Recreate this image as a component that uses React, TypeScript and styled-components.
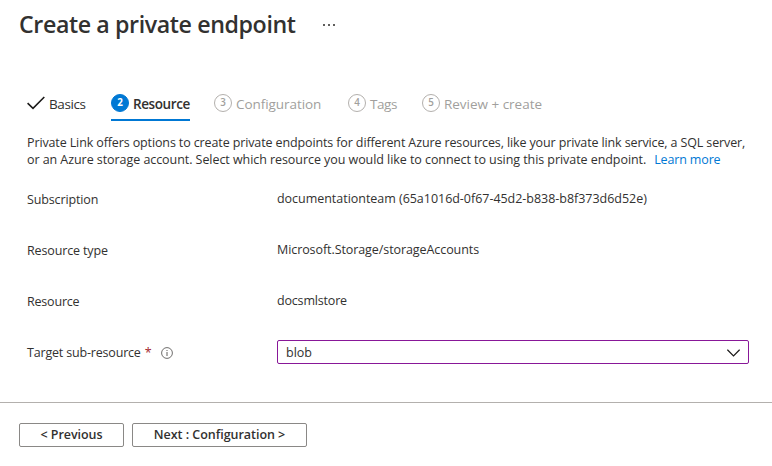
import React from "react";
import styled, { createGlobalStyle } from "styled-components";

const Global = createGlobalStyle`
  * { box-sizing: border-box; }
  body {
    margin: 0;
    background: #fff;
    color: #323130;
    font-family: "Open Sans", "Noto Sans", sans-serif;
    font-size: 12.5px;
    line-height: 17px;
  }
`;

const Page = styled.div`
  width: 772px;
  height: 466px;
  display: flex;
  flex-direction: column;
  overflow: hidden;
  white-space: nowrap;
`;

const Header = styled.header`
  display: flex;
  align-items: center;
  height: 50px;
  padding: 0 0 2px 19px;
  gap: 27px;
`;

const Title = styled.h1`
  margin: 0;
  width: 277px;
  font-size: 23.2px;
  line-height: 32px;
  font-weight: 600;
  letter-spacing: -0.39px;
`;

const MoreButton = styled.button`
  display: flex;
  gap: 3px;
  padding: 1px 0 0;
  border: 0;
  background: none;
`;

const Dot = styled.span`
  width: 2px;
  height: 2px;
  background: #605e5c;
`;

const Tabs = styled.nav`
  display: flex;
  height: 29px;
  margin: 42px 0 0 27px;
`;

const Tab = styled.div<{ $width: number; $gap: number; $state: "done" | "active" | "todo" }>`
  display: flex;
  align-items: flex-start;
  gap: 4px;
  width: ${(p) => p.$width}px;
  margin-right: ${(p) => p.$gap}px;
  color: ${(p) => (p.$state === "todo" ? "#a19f9d" : "#323130")};
  border-bottom: 2px solid ${(p) => (p.$state === "active" ? "#0078d4" : "transparent")};
`;

const TabLabel = styled.span<{ $spacing: number; $active?: boolean }>`
  padding-top: 4px;
  font-size: 13.5px;
  line-height: 17px;
  font-weight: ${(p) => (p.$active ? 600 : 400)};
  letter-spacing: ${(p) => p.$spacing}px;
`;

const StepNumber = styled.span<{ $active: boolean }>`
  flex: none;
  display: flex;
  align-items: center;
  justify-content: center;
  width: 18px;
  height: 18px;
  margin-top: 1.5px;
  border-radius: 50%;
  border: 1px solid ${(p) => (p.$active ? "#0078d4" : "#b3b0ad")};
  background: ${(p) => (p.$active ? "#0078d4" : "#fff")};
  color: ${(p) => (p.$active ? "#fff" : "#a19f9d")};
  font-size: 9.8px;
  line-height: 12px;
  font-weight: ${(p) => (p.$active ? 700 : 600)};
`;

const CheckIcon = styled.svg`
  flex: none;
  width: 18px;
  height: 14px;
  margin-top: 4px;
`;

const Intro = styled.div`
  margin: 13px 0 0 27px;
`;

const Line = styled.div<{ $spacing: number }>`
  height: 17px;
  letter-spacing: ${(p) => p.$spacing}px;
`;

const Link = styled.a`
  margin-left: 8px;
  color: #0078d4;
  letter-spacing: -0.15px;
  text-decoration: none;
`;

const Form = styled.div`
  display: flex;
  flex-direction: column;
  margin: 6px 0 0 27px;
`;

const Row = styled.div`
  display: flex;
  align-items: center;
  height: 51px;
`;

const Label = styled.div<{ $spacing: number }>`
  display: flex;
  align-items: center;
  width: 250px;
  letter-spacing: ${(p) => p.$spacing}px;
`;

const Value = styled.div<{ $spacing: number }>`
  margin-top: -2px;
  letter-spacing: ${(p) => p.$spacing}px;
`;

const Required = styled.span`
  margin-left: 4px;
  color: #a4262c;
`;

const InfoIcon = styled.svg`
  width: 12px;
  height: 12px;
  margin-left: 10px;
`;

const Select = styled.div`
  display: flex;
  align-items: center;
  justify-content: space-between;
  width: 472px;
  height: 24px;
  margin-top: -1px;
  padding: 1px 8px 0;
  border: 1px solid #881798;
  border-radius: 2px;
`;

const Chevron = styled.svg`
  width: 13px;
  height: 8px;
`;

const Footer = styled.footer`
  display: flex;
  gap: 8px;
  height: 64px;
  margin-top: auto;
  padding: 20px 0 0 19px;
  border-top: 1px solid #b3b0ad;
`;

const Button = styled.button<{ $width: number; $spacing: number }>`
  width: ${(p) => p.$width}px;
  height: 24px;
  padding: 0 0 2px;
  border: 1px solid #8a8886;
  border-radius: 2px;
  background: #fff;
  color: #323130;
  font: 600 12.5px/17px "Open Sans", "Noto Sans", sans-serif;
  letter-spacing: ${(p) => p.$spacing}px;
`;

export default function App() {
  return (
    <>
      <Global />
      <Page>
        <Header>
          <Title>Create a private endpoint</Title>
          <MoreButton aria-label="More"><Dot /><Dot /><Dot /></MoreButton>
        </Header>
        <Tabs>
          <Tab $width={59} $gap={25} $state="done">
            <CheckIcon viewBox="0 0 18 14" fill="none" stroke="#1b1a19" strokeWidth="1.6">
              <path d="M0.6 7.2 6 12.3 17.3 1" />
            </CheckIcon>
            <TabLabel $spacing={-0.4}>Basics</TabLabel>
          </Tab>
          <Tab $width={79} $gap={24} $state="active">
            <StepNumber $active>2</StepNumber>
            <TabLabel $spacing={-0.4} $active>Resource</TabLabel>
          </Tab>
          <Tab $width={107} $gap={27} $state="todo">
            <StepNumber $active={false}>3</StepNumber>
            <TabLabel $spacing={-0.06}>Configuration</TabLabel>
          </Tab>
          <Tab $width={49} $gap={25} $state="todo">
            <StepNumber $active={false}>4</StepNumber>
            <TabLabel $spacing={-0.45}>Tags</TabLabel>
          </Tab>
          <Tab $width={121} $gap={0} $state="todo">
            <StepNumber $active={false}>5</StepNumber>
            <TabLabel $spacing={-0.02}>Review + create</TabLabel>
          </Tab>
        </Tabs>
        <Intro>
          <Line $spacing={-0.122}>Private Link offers options to create private endpoints for different Azure resources, like your private link service, a SQL server,</Line>
          <Line $spacing={-0.06}>
            or an Azure storage account. Select which resource you would like to connect to using this private endpoint.
            <Link>Learn more</Link>
          </Line>
        </Intro>
        <Form>
          <Row>
            <Label $spacing={-0.13}>Subscription</Label>
            <Value $spacing={-0.03}>documentationteam (65a1016d-0f67-45d2-b838-b8f373d6d52e)</Value>
          </Row>
          <Row>
            <Label $spacing={-0.14}>Resource type</Label>
            <Value $spacing={-0.08}>Microsoft.Storage/storageAccounts</Value>
          </Row>
          <Row>
            <Label $spacing={-0.2}>Resource</Label>
            <Value $spacing={-0.18}>docsmlstore</Value>
          </Row>
          <Row>
            <Label $spacing={-0.18}>
              Target sub-resource<Required>*</Required>
              <InfoIcon viewBox="0 0 12 12" fill="none" stroke="#605e5c">
                <circle cx="6" cy="6" r="5.4" strokeWidth="0.9" />
                <path d="M6 5v4M6 3v1" />
              </InfoIcon>
            </Label>
            <Select>
              <span>blob</span>
              <Chevron viewBox="0 0 13 8" fill="none" stroke="#1b1a19" strokeWidth="1.2">
                <path d="M0.4 0.7 6.5 6.8 12.6 0.7" />
              </Chevron>
            </Select>
          </Row>
        </Form>
        <Footer>
          <Button $width={105} $spacing={-0.05}>&lt; Previous</Button>
          <Button $width={175} $spacing={-0.03}>Next : Configuration &gt;</Button>
        </Footer>
      </Page>
    </>
  );
}
